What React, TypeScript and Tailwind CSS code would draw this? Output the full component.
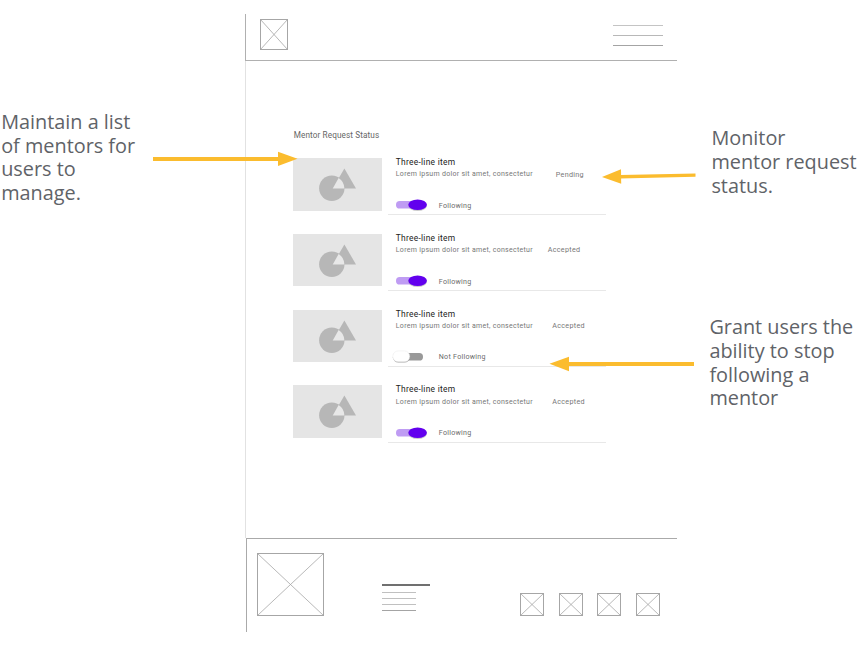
import React from "react";

type Mentor = { status: string; statusPad: string; following: boolean };

const mentors: Mentor[] = [
  { status: "Pending", statusPad: "ml-[15px]", following: true },
  { status: "Accepted", statusPad: "ml-[7px]", following: true },
  { status: "Accepted", statusPad: "ml-[11.5px]", following: false },
  { status: "Accepted", statusPad: "ml-[11.5px]", following: true },
];

function Placeholder({ w, h, color = "#a6a6a6" }: { w: number; h: number; color?: string }) {
  return (
    <svg width={w} height={h} viewBox={`0 0 ${w} ${h}`} fill="none" className="block shrink-0">
      <rect x="0.5" y="0.5" width={w - 1} height={h - 1} stroke={color} />
      <path d={`M.5 .5L${w - 0.5} ${h - 0.5}M${w - 0.5} .5L.5 ${h - 0.5}`} stroke={color} strokeWidth="0.8" />
    </svg>
  );
}

function Thumbnail() {
  return (
    <div className="h-[52.5px] w-[88.5px] shrink-0 bg-[#e5e5e5]">
      <svg width="88.5" height="52.5" viewBox="0 0 88.5 52.5" className="block">
        <circle cx="38.8" cy="30.3" r="12.7" fill="#b7b7b7" />
        <path d="M51.4 10.5L63 30.5H39.7Z" fill="#b7b7b7" />
        <path d="M45.6 20A12.7 12.7 0 0 1 51.4 30.5H39.7Z" fill="#e8e8e8" />
      </svg>
    </div>
  );
}

function Toggle({ on }: { on: boolean }) {
  return (
    <svg width="36" height="14" viewBox="0 0 36 14" className="block shrink-0">
      {on ? (
        <>
          <rect x="4" y="3.1" width="28" height="7.5" rx="3.7" fill="#bf9cf3" />
          <ellipse cx="25.6" cy="7.6" rx="9.3" ry="5.4" fill="#aaa" opacity="0.6" />
          <ellipse cx="25.6" cy="6.8" rx="9.3" ry="5.3" fill="#6200ee" />
        </>
      ) : (
        <>
          <rect x="6" y="3.1" width="25" height="7.5" rx="3.7" fill="#999" />
          <rect x="0.9" y="1.8" width="17" height="10.8" rx="5.4" fill="#777" opacity="0.65" />
          <rect x="0.8" y="0.9" width="17" height="10.9" rx="5.4" fill="#fff" stroke="#ddd" strokeWidth="0.3" />
        </>
      )}
    </svg>
  );
}

function MentorRow({ mentor }: { mentor: Mentor }) {
  return (
    <li className="flex h-[75.75px] gap-[6px]">
      <Thumbnail />
      <div className="flex h-[57.3px] w-[218px] border-b border-[#e8e8e8]">
        <div className="flex w-[153px] shrink-0 flex-col whitespace-nowrap">
          <span className="pl-2 text-[8.4px] leading-[9px] tracking-[0.28px] text-[#222]">Three-line item</span>
          <span className="mt-[3.3px] pl-2 text-[7px] leading-[9px] tracking-[0.29px] text-[#777]">
            Lorem ipsum dolor sit amet, consectetur
          </span>
          <div className="mt-[19.2px] flex items-center pl-[4px]">
            <Toggle on={mentor.following} />
            <span className="ml-[11px] text-[7.1px] leading-[9px] tracking-[0.26px] text-[#6b6b6b]">
              {mentor.following ? "Following" : "Not Following"}
            </span>
          </div>
        </div>
        <span className={`${mentor.statusPad} mt-[11.5px] text-[7.2px] leading-[9px] tracking-[0.28px] text-[#777]`}>
          {mentor.status}
        </span>
      </div>
    </li>
  );
}

function Wireframe() {
  return (
    <main className="flex w-[432px] shrink-0 flex-col pt-[14px] font-[Roboto,sans-serif]">
      <header className="flex h-[47px] items-start justify-between border-b border-l border-[#b0b0b0] pl-[14px] pr-[14.5px]">
        <div className="pt-[5px]">
          <Placeholder w={28} h={31} />
        </div>
        <div className="mt-[11px] flex w-[49.5px] flex-col gap-[9px]">
          <div className="h-px bg-[#c4c4c4]" />
          <div className="h-px bg-[#b8b8b8]" />
          <div className="h-px bg-[#a4a4a4]" />
        </div>
      </header>
      <section className="h-[477px] border-l border-[#e2e2e2] pl-[47.3px] pt-[69px]">
        <h1 className="pl-[0.4px] text-[8.2px] leading-[10px] tracking-[0.11px] text-[#666]">Mentor Request Status</h1>
        <ul className="mt-[18px]">
          {mentors.map((m, i) => (
            <MentorRow key={i} mentor={m} />
          ))}
        </ul>
      </section>
      <footer className="ml-px flex h-[94px] border-l border-t border-[#aaa]">
        <div className="pl-[10px] pt-[14px]">
          <Placeholder w={67} h={63} />
        </div>
        <div className="ml-[58px] mt-[45px] w-[48px]">
          <div className="h-[1.5px] bg-[#707070]" />
          <div className="mt-[6px] flex w-[34px] flex-col gap-[5px]">
            <div className="h-px bg-[#c0c0c0]" />
            <div className="h-px bg-[#c0c0c0]" />
            <div className="h-px bg-[#c0c0c0]" />
            <div className="h-px bg-[#a4a4a4]" />
          </div>
        </div>
        <div className="ml-[90px] mt-[54px] flex gap-[14.5px]">
          {[0, 1, 2, 3].map((i) => (
            <Placeholder key={i} w={24} h={23} />
          ))}
        </div>
      </footer>
    </main>
  );
}

function Arrows() {
  return (
    <svg width="862" height="650" viewBox="0 0 862 650" className="pointer-events-none absolute inset-0">
      <g stroke="#fbbc2e" strokeWidth="4">
        <path d="M153 159H279" />
        <path d="M695.5 175.1L620 176.7" strokeWidth="3.4" />
        <path d="M694 364H568" />
      </g>
      <g fill="#fbbc2e">
        <path d="M278 151.7L297.5 158.8L278 166Z" />
        <path d="M621 169.3L602 176.9L621.2 183.8Z" />
        <path d="M569 356.7L549.5 363.8L569 371.3Z" />
      </g>
    </svg>
  );
}

export default function App() {
  return (
    <div className="relative flex h-[650px] w-[862px] overflow-hidden bg-white">
      <aside className="w-[245px] shrink-0 whitespace-nowrap pl-[1.2px] pt-[110px] font-['Open_Sans',sans-serif] text-[19.85px] leading-[23.7px] text-[#5f6368]">
        <p>
          Maintain a list
          <br />
          of mentors for
          <br />
          users to
          <br />
          manage.
        </p>
      </aside>
      <Wireframe />
      <aside className="flex flex-col whitespace-nowrap pl-[34.4px] pt-[126.3px] font-['Open_Sans',sans-serif] text-[19.85px] leading-[23.7px] text-[#5f6368]">
        <p>
          Monitor
          <br />
          mentor request
          <br />
          status.
        </p>
        <p className="-ml-[2px] mt-[117.7px]">
          Grant users the
          <br />
          ability to stop
          <br />
          following a
          <br />
          mentor
        </p>
      </aside>
      <Arrows />
    </div>
  );
}
